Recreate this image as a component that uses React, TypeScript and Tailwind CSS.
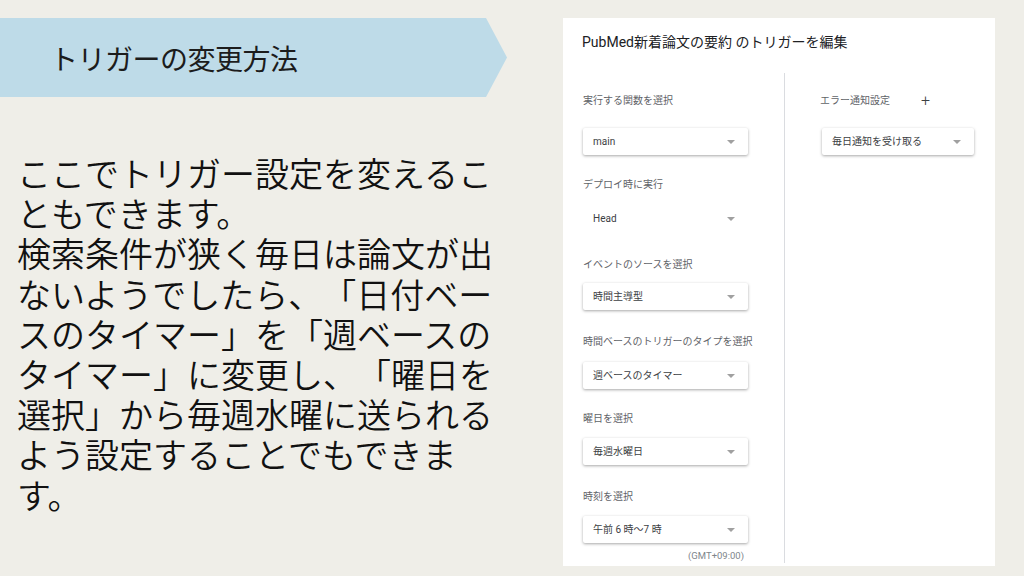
import React from 'react'

const jp = { fontFamily: '"Noto Sans CJK JP", "Noto Sans", sans-serif' }
const ui = { fontFamily: 'Roboto, "Noto Sans CJK JP", sans-serif' }

function Caret() {
  return <span className="block w-0 h-0 border-l-[4px] border-r-[4px] border-t-[4px] border-l-transparent border-r-transparent border-t-[#a0a0a0]" />
}

function SelectBox({ value, width = 'w-[165px]', boxed = true }: { value: string; width?: string; boxed?: boolean }) {
  return (
    <div
      className={`${width} h-[27px] flex items-center justify-between pl-[10px] pr-[13px] rounded-[2px] bg-white ${
        boxed ? 'shadow-[0_1px_3px_rgba(0,0,0,0.35)]' : ''
      }`}
    >
      <span className="text-[10px] text-[#3c4043] leading-none">{value}</span>
      <Caret />
    </div>
  )
}

function Label({ children, className = '' }: { children: React.ReactNode; className?: string }) {
  return <div className={`text-[10px] leading-[14px] text-[#5f6368] ${className}`}>{children}</div>
}

export default function App() {
  return (
    <div className="w-[1024px] h-[576px] bg-[#efeee8] flex overflow-hidden">
      {/* Left: slide heading and body */}
      <div className="w-[563px] flex flex-col pt-[18px]" style={jp}>
        <div className="w-[507px] h-[79px] bg-[#bedbe8] flex items-center pl-[50px] [clip-path:polygon(0_0,486px_0,507px_50%,486px_100%,0_100%)]">
          <span className="text-[28px] leading-none text-[#1c1c1c] tracking-[-0.5px]">トリガーの変更方法</span>
        </div>
        <p className="mt-[56px] ml-[17px] w-[485px] text-[34px] leading-[40.2px] font-[350] text-[#111] [text-spacing-trim:space-all]">
          ここでトリガー設定を変えることもできます。
          <br />
          検索条件が狭く毎日は論文が出ないようでしたら、「日付ベースのタイマー」を「週ベースのタイマー」に変更し、「曜日を選択」から毎週水曜に送られるよう設定することでもできます。
        </p>
      </div>

      {/* Right: trigger edit dialog */}
      <div className="mt-[18px] w-[432px] h-[548px] bg-white flex flex-col" style={ui}>
        <div className="pt-[14px] pl-[19px] text-[14px] leading-[20px] text-[#202124]">
          PubMed新着論文の要約 のトリガーを編集
        </div>
        <div className="mt-[21px] flex flex-1 pb-[3px]">
          <div className="w-[222px] pl-[20px] border-r border-[#dadce0] flex flex-col">
            <Label className="mt-[21px]">実行する関数を選択</Label>
            <div className="mt-[20px]"><SelectBox value="main" /></div>

            <Label className="mt-[23px]">デプロイ時に実行</Label>
            <div className="mt-[13px]"><SelectBox value="Head" boxed={false} /></div>

            <Label className="mt-[26px]">イベントのソースを選択</Label>
            <div className="mt-[11px]"><SelectBox value="時間主導型" /></div>

            <Label className="mt-[25px]">時間ベースのトリガーのタイプを選択</Label>
            <div className="mt-[13px]"><SelectBox value="週ベースのタイマー" /></div>

            <Label className="mt-[23px]">曜日を選択</Label>
            <div className="mt-[12px]"><SelectBox value="毎週水曜日" /></div>

            <Label className="mt-[25px]">時刻を選択</Label>
            <div className="mt-[12px]"><SelectBox value="午前 6 時〜7 時" /></div>

            <div className="w-[161px] mt-[7px] text-right text-[9.5px] leading-[12px] text-[#80868b]">(GMT+09:00)</div>
          </div>

          <div className="flex-1 pl-[35px] flex flex-col">
            <div className="mt-[21px] flex items-center">
              <Label>エラー通知設定</Label>
              <span className="ml-[31px] text-[16px] leading-[14px] font-light text-[#3c4043]">+</span>
            </div>
            <div className="mt-[20px] ml-[2px]"><SelectBox value="毎日通知を受け取る" width="w-[152px]" /></div>
          </div>
        </div>
      </div>
    </div>
  )
}
